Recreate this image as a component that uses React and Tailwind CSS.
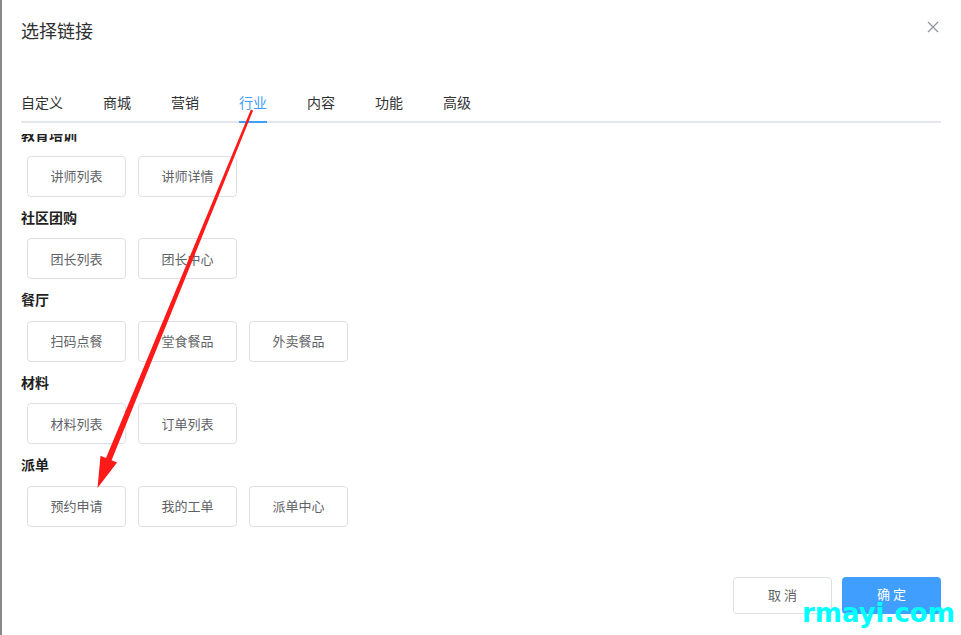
import React from "react";

const font = { fontFamily: '"Noto Sans CJK SC", "Noto Sans", sans-serif' };

const tabs = ["自定义", "商城", "营销", "行业", "内容", "功能", "高级"];

const sections = [
  { title: "教育培训", items: ["讲师列表", "讲师详情"] },
  { title: "社区团购", items: ["团长列表", "团长中心"] },
  { title: "餐厅", items: ["扫码点餐", "堂食餐品", "外卖餐品"] },
  { title: "材料", items: ["材料列表", "订单列表"] },
  { title: "派单", items: ["预约申请", "我的工单", "派单中心"] },
];

export default function App() {
  return (
    <div
      className="relative w-[961px] h-[635px] overflow-hidden bg-white border-l-2 border-[#8a8a8a] pl-[19px] pr-[20px]"
      style={font}
    >
      {/* header */}
      <div className="h-[83px] pt-[18px] flex justify-between">
        <div className="text-[18px] leading-[24px] text-[#303133]">选择链接</div>
        <svg width="12" height="12" viewBox="0 0 12 12" className="mt-[3px] mr-[2px]">
          <path d="M1 1 L11 11 M11 1 L1 11" stroke="#909399" strokeWidth="1.2" fill="none" />
        </svg>
      </div>

      {/* tabs */}
      <div className="flex h-[38px] box-content border-b-2 border-[#e4e7ed]">
        {tabs.map((t, i) => (
          <div
            key={t}
            className={`h-full ${i === 0 ? "pr-[20px]" : "px-[20px]"} text-[14px] leading-[38px] ${
              t === "行业" ? "text-[#409eff]" : "text-[#303133]"
            }`}
          >
            <span className="relative block h-full">
              {t}
              {t === "行业" && (
                <span className="absolute left-0 right-0 bottom-[-2px] h-[2px] bg-[#409eff]" />
              )}
            </span>
          </div>
        ))}
      </div>

      {/* scroll content */}
      <div className="mt-[11px] h-[426px] overflow-hidden">
        <div className="-mt-[10px]">
          {sections.map((s) => (
            <div key={s.title} className="mb-[10px]">
              <div className="h-[21px] leading-[21px] text-[14px] font-bold text-[#1f1f1f]">{s.title}</div>
              <div className="mt-[10.5px] ml-[6px] flex gap-[12px]">
                {s.items.map((it) => (
                  <div
                    key={it}
                    className="w-[99px] h-[41px] border border-[#dcdfe6] rounded-[4px] flex items-center justify-center text-[13px] text-[#606266]"
                  >
                    {it}
                  </div>
                ))}
              </div>
            </div>
          ))}
        </div>
      </div>

      {/* footer */}
      <div className="pt-[17px] flex justify-end gap-[10px]">
        <div className="w-[99px] h-[37px] border border-[#dcdfe6] rounded-[4px] flex items-center justify-center text-[13px] text-[#606266] pb-[1px]">
          取 消
        </div>
        <div className="w-[99px] h-[37px] bg-[#409eff] rounded-[4px] flex items-center justify-center text-[13px] text-white pb-[3px]">
          确 定
        </div>
      </div>

      {/* red arrow annotation */}
      <svg className="absolute left-0 top-0 pointer-events-none" width="961" height="635" viewBox="0 0 961 635">
        <polygon
          points="248.9,109.5 251.1,110.5 109.6,460.3 115.1,462.6 95.5,488 98.5,455.8 104.0,458.1"
          fill="#ff1a1a"
        />
      </svg>

      {/* watermark */}
      <div
        className="absolute left-[800px] top-[600px] text-[26px] leading-[26px] font-bold text-[#00ffff]"
        style={{ fontFamily: '"DejaVu Sans", sans-serif' }}
      >
        rmayi.com
      </div>
    </div>
  );
}
